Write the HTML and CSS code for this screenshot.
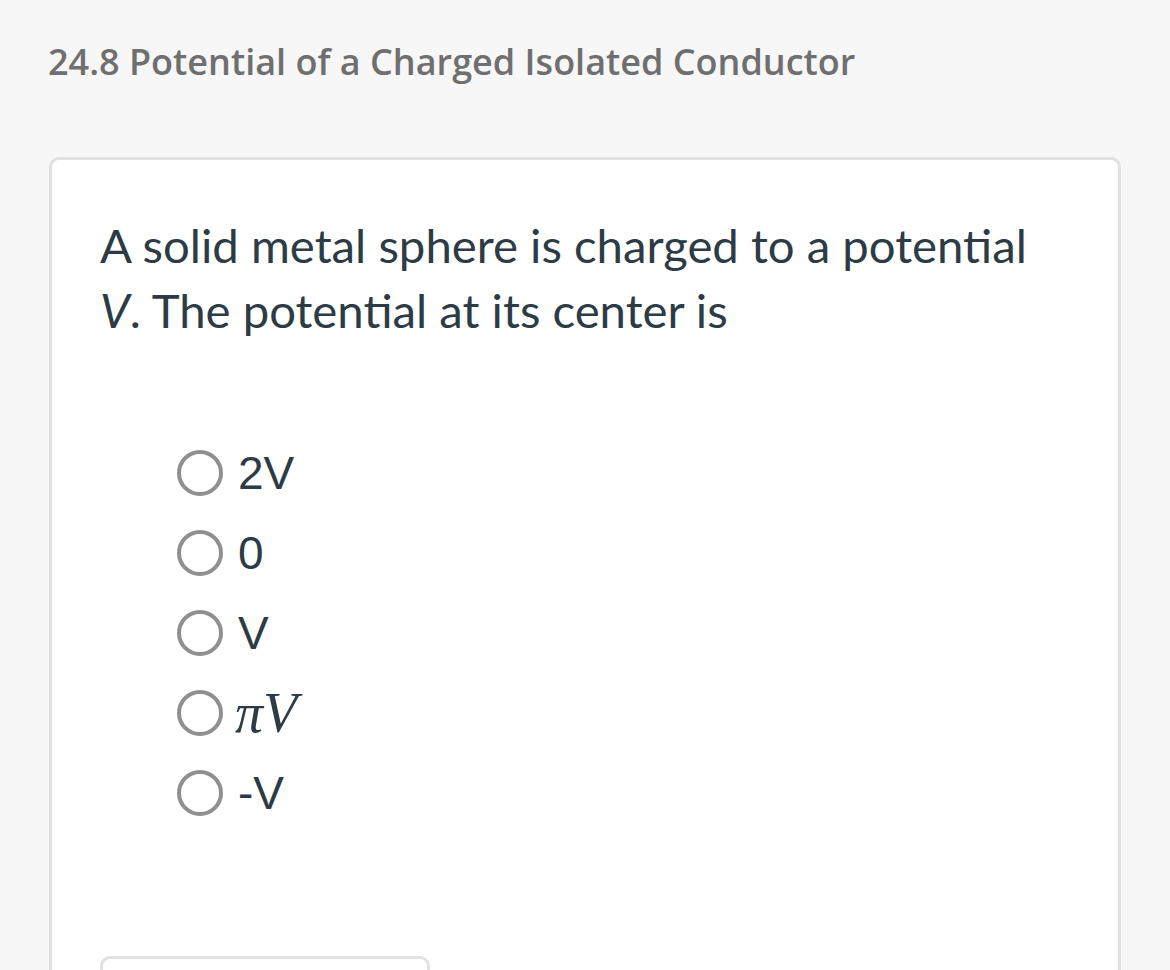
FILE: index.html
```html
<!DOCTYPE html>
<html>
<head>
<meta charset="utf-8">
<link rel="stylesheet" href="styles.css">
</head>
<body>
<div class="page">
  <h1 class="title">24.8 Potential of a Charged Isolated Conductor</h1>
  <div class="card">
    <p class="question">A solid metal sphere is charged to a potential <i>V</i>. The potential at its center is</p>
    <ul class="options">
      <li class="option"><span class="radio"></span><span class="label">2V</span></li>
      <li class="option"><span class="radio"></span><span class="label">0</span></li>
      <li class="option"><span class="radio"></span><span class="label">V</span></li>
      <li class="option"><span class="radio"></span><span class="label math">πV</span></li>
      <li class="option"><span class="radio"></span><span class="label">-V</span></li>
    </ul>
    <div class="submit"></div>
  </div>
</div>
</body>
</html>
```
FILE: styles.css
```css
* {
  box-sizing: border-box;
}
html, body {
  margin: 0;
  padding: 0;
  background: #f7f7f7;
}
.page {
  padding: 38px 0 0 48px;
  height: 970px;
  overflow: hidden;
}
.title {
  margin: 0;
  font-family: "Open Sans", sans-serif;
  font-weight: 600;
  font-size: 36px;
  line-height: 48px;
  color: #6f6f6f;
}
.card {
  margin-top: 71px;
  margin-left: 1px;
  width: 1072px;
  background: #fff;
  border: 3px solid #e1e1e1;
  border-radius: 10px;
  padding: 52px 48px 40px 48px;
}
.question {
  margin: 0;
  font-family: Lato, sans-serif;
  font-size: 47.3px;
  line-height: 65px;
  color: #2d3b45;
}
.options {
  list-style: none;
  margin: 91px 0 0 0;
  padding: 0 0 0 77px;
}
.option {
  display: flex;
  align-items: center;
  height: 80px;
}
.radio {
  width: 46px;
  height: 46px;
  border: 4px solid #8f8f8f;
  border-radius: 50%;
  flex: none;
}
.label {
  margin-left: 15px;
  font-family: "Liberation Sans", Arial, sans-serif;
  font-size: 46px;
  color: #2d3b45;
}
.math {
  font-family: "Liberation Serif", "Times New Roman", serif;
  font-style: italic;
  font-size: 56px;
  margin-left: 12px;
}
.submit {
  margin-top: 123px;
  width: 330px;
  height: 60px;
  border: 3px solid #e1e1e1;
  border-radius: 10px;
}
```
